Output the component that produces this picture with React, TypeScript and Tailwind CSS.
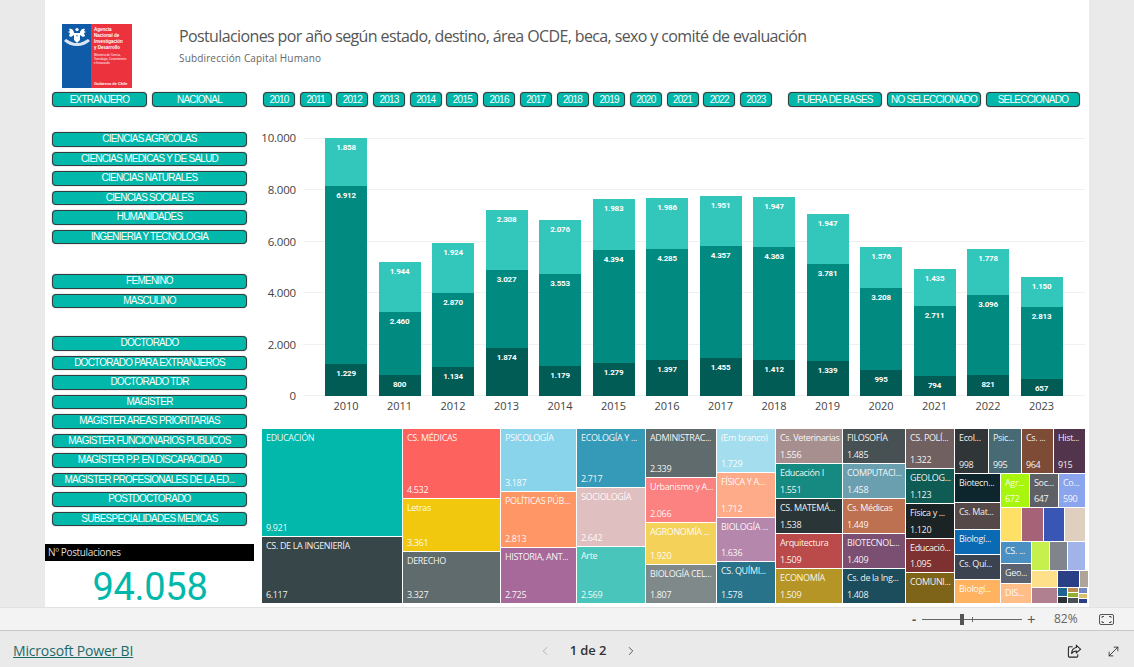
import { ChevronLeft, ChevronRight, MoveDiagonal } from "lucide-react";

type Cell = {
  c: string;
  t?: string;
  v?: string;
  row?: boolean;
  kids?: Cell[];
};

const years = [2010, 2011, 2012, 2013, 2014, 2015, 2016, 2017, 2018, 2019, 2020, 2021, 2022, 2023];

const bars = [
  [1229, 6912, 1858],
  [800, 2460, 1944],
  [1134, 2870, 1924],
  [1874, 3027, 2308],
  [1179, 3553, 2076],
  [1279, 4394, 1983],
  [1397, 4285, 1986],
  [1455, 4357, 1951],
  [1412, 4363, 1947],
  [1339, 3781, 1947],
  [995, 3208, 1576],
  [794, 2711, 1435],
  [821, 3096, 1778],
  [657, 2813, 1150],
];

const fmt = (n: number) => (n >= 1000 ? `${Math.floor(n / 1000)}.${String(n % 1000).padStart(3, "0")}` : String(n));

const areas = ["CIENCIAS AGRICOLAS", "CIENCIAS MEDICAS Y DE SALUD", "CIENCIAS NATURALES", "CIENCIAS SOCIALES", "HUMANIDADES", "INGENIERIA Y TECNOLOGIA"];
const degrees = [
  "DOCTORADO",
  "DOCTORADO PARA EXTRANJEROS",
  "DOCTORADO TDR",
  "MAGISTER",
  "MAGISTER AREAS PRIORITARIAS",
  "MAGISTER FUNCIONARIOS PUBLICOS",
  "MAGISTER P.P. EN DISCAPACIDAD",
  "MAGISTER PROFESIONALES DE LA ED...",
  "POSTDOCTORADO",
  "SUBESPECIALIDADES MEDICAS",
];

const treemap: Cell[] = [
  {
    c: "w-[140px]",
    kids: [
      { c: "h-[107px] bg-[#01b8aa]", t: "EDUCACIÓN", v: "9.921" },
      { c: "h-[66px] bg-[#374649]", t: "CS. DE LA INGENIERÍA", v: "6.117" },
    ],
  },
  {
    c: "w-[97px]",
    kids: [
      { c: "h-[69px] bg-[#fd625e]", t: "CS. MÉDICAS", v: "4.532" },
      { c: "h-[52px] bg-[#f2c80f]", t: "Letras", v: "3.361" },
      { c: "h-[51px] bg-[#5f6b6d]", t: "DERECHO", v: "3.327" },
    ],
  },
  {
    c: "w-[75px]",
    kids: [
      { c: "h-[62px] bg-[#8ad4eb]", t: "PSICOLOGÍA", v: "3.187" },
      { c: "h-[55px] bg-[#fe9666]", t: "POLÍTICAS PÚB...", v: "2.813" },
      { c: "h-[55px] bg-[#a66999]", t: "HISTORIA, ANT...", v: "2.725" },
    ],
  },
  {
    c: "w-[68px]",
    kids: [
      { c: "h-[58px] bg-[#3599b8]", t: "ECOLOGÍA Y ...", v: "2.717" },
      { c: "h-[58px] bg-[#dfbfbf]", t: "SOCIOLOGÍA", v: "2.642" },
      { c: "h-[56px] bg-[#4ac5bb]", t: "Arte", v: "2.569" },
    ],
  },
  {
    c: "w-[70px]",
    kids: [
      { c: "h-[48px] bg-[#5f6b6d]", t: "ADMINISTRAC...", v: "2.339" },
      { c: "h-[44px] bg-[#fb8281]", t: "Urbanismo y A...", v: "2.066" },
      { c: "h-[41px] bg-[#f4d25a]", t: "AGRONOMÍA ...", v: "1.920" },
      { c: "h-[38px] bg-[#7f898a]", t: "BIOLOGÍA CEL...", v: "1.807" },
    ],
  },
  {
    c: "w-[58px]",
    kids: [
      { c: "h-[43px] bg-[#a4ddee]", t: "(Em branco)", v: "1.729" },
      { c: "h-[44px] bg-[#fdab89]", t: "FÍSICA Y A...", v: "1.712" },
      { c: "h-[43px] bg-[#b687ac]", t: "BIOLOGÍA ...", v: "1.636" },
      { c: "h-[41px] bg-[#28738a]", t: "CS. QUÍMI...", v: "1.578" },
    ],
  },
  {
    c: "w-[66px]",
    kids: [
      { c: "h-[34px] bg-[#a78f8f]", t: "Cs. Veterinarias", v: "1.556" },
      { c: "h-[34px] bg-[#168980]", t: "Educación I", v: "1.551" },
      { c: "h-[34px] bg-[#293537]", t: "CS. MATEMÁ...", v: "1.538" },
      { c: "h-[34px] bg-[#bb4a4a]", t: "Arquitectura", v: "1.509" },
      { c: "h-[34px] bg-[#b59525]", t: "ECONOMÍA", v: "1.509" },
    ],
  },
  {
    c: "w-[62px]",
    kids: [
      { c: "h-[34px] bg-[#475052]", t: "FILOSOFÍA", v: "1.485" },
      { c: "h-[34px] bg-[#6a9fb0]", t: "COMPUTACI...", v: "1.458" },
      { c: "h-[34px] bg-[#bd7150]", t: "Cs. Médicas", v: "1.449" },
      { c: "h-[34px] bg-[#7b4f71]", t: "BIOTECNOL...", v: "1.409" },
      { c: "h-[34px] bg-[#1b4d5c]", t: "Cs. de la Ing...", v: "1.408" },
    ],
  },
  {
    c: "w-[48px]",
    kids: [
      { c: "h-[39px] bg-[#706060]", t: "CS. POLÍ...", v: "1.322" },
      { c: "h-[34px] bg-[#0f5c55]", t: "GEOLOG...", v: "1.123" },
      { c: "h-[34px] bg-[#1c2325]", t: "Física y ...", v: "1.120" },
      { c: "h-[33px] bg-[#7d3231]", t: "Educació...", v: "1.095" },
      { c: "h-[30px] bg-[#7d6419]", t: "COMUNI..." },
    ],
  },
  {
    c: "w-[130px]",
    kids: [
      {
        c: "h-[44px]",
        row: true,
        kids: [
          { c: "w-[33px] bg-[#303637]", t: "Ecol...", v: "998" },
          { c: "w-[32px] bg-[#476a75]", t: "Psic...", v: "995" },
          { c: "w-[31px] bg-[#7e4b36]", t: "Cs. ...", v: "964" },
          { c: "w-[31px] bg-[#52354c]", t: "Hist...", v: "915" },
        ],
      },
      {
        c: "h-[129px]",
        row: true,
        kids: [
          {
            c: "w-[45px]",
            kids: [
              { c: "h-[28px] bg-[#0d262e]", t: "Biotecn..." },
              { c: "h-[26px] bg-[#544848]", t: "Cs. Mat..." },
              { c: "h-[24px] bg-[#0a6ab4]", t: "Biologí..." },
              { c: "h-[24px] bg-[#3c4350]", t: "Cs. Quí..." },
              { c: "h-[23px] bg-[#ffb25f]", t: "Biologí..." },
            ],
          },
          {
            c: "w-[84px]",
            kids: [
              {
                c: "h-[33px]",
                row: true,
                kids: [
                  { c: "w-[28px] bg-[#a8f50e]", t: "Agr...", v: "672" },
                  { c: "w-[28px] bg-[#5f6066]", t: "Soc...", v: "647" },
                  { c: "w-[26px] bg-[#8aa4ee]", t: "Co...", v: "590" },
                ],
              },
              {
                c: "h-[33px]",
                row: true,
                kids: [
                  { c: "w-[20px] bg-[#ffe066]" },
                  { c: "w-[21px] bg-[#a66277]" },
                  { c: "w-[20px] bg-[#3a56b5]" },
                  { c: "w-[20px] bg-[#dfcfbf]" },
                ],
              },
              {
                c: "h-[61px]",
                row: true,
                kids: [
                  {
                    c: "w-[30px]",
                    kids: [
                      { c: "h-[21px] bg-[#4a90c2]", t: "CS. ..." },
                      { c: "h-[19px] bg-[#5d6270]", t: "Geo..." },
                      { c: "h-[19px] bg-[#ffbe87]", t: "DIS..." },
                    ],
                  },
                  {
                    c: "w-[53px]",
                    kids: [
                      {
                        c: "h-[28px]",
                        row: true,
                        kids: [
                          { c: "w-[17px] bg-[#c6f04e]" },
                          { c: "w-[17px] bg-[#7f858a]" },
                          { c: "w-[17px] bg-[#a0b4ea]" },
                        ],
                      },
                      {
                        c: "h-[16px]",
                        row: true,
                        kids: [
                          { c: "w-[25px] bg-[#ffe08a]" },
                          { c: "w-[21px] bg-[#2a3f85]" },
                          { c: "w-[5px] bg-[#afa498]" },
                        ],
                      },
                      {
                        c: "h-[15px]",
                        row: true,
                        kids: [
                          { c: "w-[25px] bg-[#b08090]" },
                          {
                            c: "w-[9px]",
                            kids: [
                              { c: "h-[8px] bg-[#1f6391]" },
                              { c: "h-[6px] bg-[#2b3238]" },
                            ],
                          },
                          {
                            c: "w-[10px]",
                            kids: [
                              { c: "h-[4px] bg-[#bd8a50]" },
                              { c: "h-[4px] bg-[#93b02c]" },
                              { c: "h-[5px] bg-[#4a5258]" },
                            ],
                          },
                          {
                            c: "w-[6px]",
                            kids: [
                              { c: "h-[5px] bg-[#7587c0]" },
                              { c: "h-[4px] bg-[#d8c070]" },
                              { c: "h-[4px] bg-[#2a3f85]" },
                            ],
                          },
                        ],
                      },
                    ],
                  },
                ],
              },
            ],
          },
        ],
      },
    ],
  },
];

const Pill = ({ label, className }: { label: string; className: string }) => (
  <div
    className={`flex items-center justify-center overflow-hidden whitespace-nowrap rounded-[4px] border border-[#333f3e] bg-[#01b8aa] font-['Liberation_Sans',Arial,sans-serif] text-[10px] leading-none tracking-[-0.75px] text-white shadow-[0_0_1px_#555] ${className}`}
  >
    {label}
  </div>
);

const TreeCell = ({ cell }: { cell: Cell }) => {
  if (cell.kids) {
    return (
      <div className={`flex shrink-0 gap-px ${cell.row ? "flex-row" : "flex-col"} ${cell.c}`}>
        {cell.kids.map((kid, i) => (
          <TreeCell key={i} cell={kid} />
        ))}
      </div>
    );
  }
  return (
    <div className={`flex shrink-0 flex-col justify-between overflow-hidden whitespace-nowrap px-[4px] pb-[1px] pt-[2px] text-[9px] leading-[14px] tracking-[-0.35px] text-white/95 ${cell.c}`}>
      <span>{cell.t}</span>
      <span>{cell.v}</span>
    </div>
  );
};

const Logo = () => (
  <svg viewBox="0 0 70 64" className="h-[64px] w-[70px] font-['Liberation_Sans',Arial,sans-serif]">
    <rect width="29" height="64" fill="#0f5ba8" />
    <rect x="29" width="41" height="64" fill="#ec333d" />
    {/* crest */}
    <g fill="#fff">
      <path d="M12 9h6v7l-3 3-3-3z" />
      <path d="M12 8c-1-3-3-4-5-3l1 2-2 1 2 1-1 3 2 1 3-2zM18 8c1-3 3-4 5-3l-1 2 2 1-2 1 1 3-2 1-3-2z" />
      <path d="M4 15c4 2 6 4 11 4s7-2 11-4l2 2c-3 3-8 5-13 5S5 20 2 17z" opacity="0.85" />
      <circle cx="15" cy="5.5" r="1.6" />
    </g>
    <path d="M15 10.5l.8 1.8h-1.6z" fill="#0f5ba8" />
    <g fill="#fff" fontWeight="700" fontSize="4.5">
      <text x="32" y="7">Agencia</text>
      <text x="32" y="13">Nacional de</text>
      <text x="32" y="19">Investigación</text>
      <text x="32" y="25">y Desarrollo</text>
    </g>
    <g fill="#fff" fontSize="2.8">
      <text x="32" y="31.5">Ministerio de Ciencia,</text>
      <text x="32" y="35.5">Tecnología, Conocimiento</text>
      <text x="32" y="39.5">e Innovación</text>
    </g>
    <text x="32" y="60.5" fill="#fff" fontSize="3.9" fontWeight="700">Gobierno de Chile</text>
  </svg>
);

const Chart = () => (
  <div className="flex h-[322px] flex-col pt-[31px]">
    <div className="flex">
      <div className="flex h-[258px] w-[34px] flex-col justify-between text-[11.5px] tracking-[-0.2px] text-[#444]">
        {["10.000", "8.000", "6.000", "4.000", "2.000", "0"].map((l) => (
          <div key={l} className="flex h-0 items-center justify-end">
            {l}
          </div>
        ))}
      </div>
      <div className="relative ml-[7px] h-[258px] w-[782px]">
        <div className="absolute inset-0 flex flex-col justify-between">
          {[0, 1, 2, 3, 4, 5].map((i) => (
            <div key={i} className="h-px bg-[#f0f0f0]" />
          ))}
        </div>
        <div className="relative flex h-full items-end gap-[11.5px] pl-[22px]">
          {bars.map((stack, i) => (
            <div key={i} className="flex w-[42px] flex-col-reverse">
              {stack.map((n, j) => (
                <div
                  key={j}
                  style={{ height: `${n * 0.0258}px` }}
                  className={`overflow-hidden pt-[5px] text-center font-['Roboto',sans-serif] text-[8px] font-bold leading-[10px] tracking-[-0.2px] text-white ${
                    j === 0 ? "bg-[#005c55]" : j === 1 ? "bg-[#018a80]" : "bg-[#33c6bb]"
                  }`}
                >
                  {fmt(n)}
                </div>
              ))}
            </div>
          ))}
        </div>
      </div>
    </div>
    <div className="ml-[41px] mt-[2px] flex gap-[11.5px] pl-[22px] text-[11px] leading-[16px] text-[#444]">
      {years.map((y) => (
        <div key={y} className="w-[42px] text-center">
          {y}
        </div>
      ))}
    </div>
  </div>
);

export default function App() {
  return (
    <div className="flex h-[667px] w-[1134px] flex-col overflow-hidden bg-[#eaeaea] font-['Open_Sans',sans-serif]">
      <div className="ml-[45px] flex h-[607px] w-[1044px] shrink-0 flex-col bg-white">
        <div className="flex h-[92px] shrink-0 pl-[17px] pt-[24px]">
          <Logo />
          <div className="ml-[47px]">
            <div className="whitespace-nowrap text-[16px] leading-[24px] tracking-[-0.62px] text-[#555]">
              Postulaciones por año según estado, destino, área OCDE, beca, sexo y comité de evaluación
            </div>
            <div className="mt-[3px] text-[10px] leading-[14px] tracking-[0.15px] text-[#666]">Subdirección Capital Humano</div>
          </div>
        </div>

        <div className="flex h-[15px] shrink-0 pl-[7px]">
          <div className="flex gap-[5px]">
            <Pill label="EXTRANJERO" className="w-[95px]" />
            <Pill label="NACIONAL" className="w-[95px]" />
          </div>
          <div className="ml-[16px] flex gap-[4.7px]">
            {years.map((y) => (
              <Pill key={y} label={String(y)} className="w-[32px]" />
            ))}
          </div>
          <div className="ml-[16px] flex gap-[5px]">
            <Pill label="FUERA DE BASES" className="w-[94px]" />
            <Pill label="NO SELECCIONADO" className="w-[94px]" />
            <Pill label="SELECCIONADO" className="w-[94px]" />
          </div>
        </div>

        <div className="flex min-h-0 flex-1">
          <div className="flex w-[217px] shrink-0 flex-col pt-[25px]">
            <div className="ml-[7px] flex w-[195px] flex-col gap-[5px]">
              {areas.map((a) => (
                <Pill key={a} label={a} className="h-[14.5px]" />
              ))}
            </div>
            <div className="ml-[7px] mt-[30px] flex w-[195px] flex-col gap-[5px]">
              <Pill label="FEMENINO" className="h-[14.5px]" />
              <Pill label="MASCULINO" className="h-[14.5px]" />
            </div>
            <div className="ml-[7px] mt-[28px] flex w-[195px] flex-col gap-[5px]">
              {degrees.map((d) => (
                <Pill key={d} label={d} className="h-[14.5px]" />
              ))}
            </div>
            <div className="mt-[18px] flex h-[17px] w-[209px] shrink-0 items-center bg-black pl-[3px] text-[10px] tracking-[-0.35px] text-[#ddd]">
              Nº Postulaciones
            </div>
            <div className="mt-[8px] w-[209px] pl-[1px] text-center font-['Roboto',sans-serif] text-[38px] leading-[36px] tracking-[-0.3px] text-[#01b8aa]">
              94.058
            </div>
          </div>

          <div className="flex min-w-0 flex-col">
            <Chart />
            <div className="flex h-[174px] gap-px">
              {treemap.map((col, i) => (
                <TreeCell key={i} cell={col} />
              ))}
            </div>
          </div>
        </div>
      </div>

      <div className="flex h-[24px] shrink-0 items-center border-y border-y-[#e2e2e2] border-b-[#c8c8c8] bg-[#f3f3f3] pl-[912px] text-[#555]">
        <span className="w-[8px] text-[13px] font-bold leading-none">-</span>
        <div className="relative ml-[2px] h-[1px] w-[100px] bg-[#666]">
          <div className="absolute left-[38px] top-[-5px] h-[11px] w-[4px] bg-[#555]" />
          <div className="absolute left-[50px] top-[-2px] h-[5px] w-px bg-[#666]" />
        </div>
        <span className="ml-[5px] w-[12px] text-[15px] leading-none">+</span>
        <span className="ml-[15px] text-[12px] text-[#666]">82%</span>
        <svg viewBox="0 0 15 11" fill="none" stroke="#555" className="ml-[21px] h-[11px] w-[15px]">
          <rect x="0.5" y="0.5" width="14" height="10" rx="1.5" />
          <path d="M3 4V2.5h2M10 2.5h2V4M12 7v1.5h-2M5 8.5H3V7" />
        </svg>
      </div>

      <div className="flex min-h-0 flex-1 items-center justify-between px-[13px] pt-[4px]">
        <a className="w-[300px] text-[14px] leading-[20px] tracking-[-0.17px] text-[#1b6a6a] underline">Microsoft Power BI</a>
        <div className="flex items-center text-[#333]">
          <ChevronLeft size={14} strokeWidth={1.5} className="text-[#aaa]" />
          <span className="mx-[18px] text-[13px] font-semibold tracking-[-0.1px]">1 de 2</span>
          <ChevronRight size={14} strokeWidth={1.5} className="text-[#444]" />
        </div>
        <div className="flex w-[258px] items-center justify-end gap-[24px] text-[#222]">
          <svg viewBox="0 0 16 16" fill="none" stroke="currentColor" strokeWidth="1.1" className="h-[15px] w-[15px]">
            <path d="M6 3H2.5A1 1 0 0 0 1.5 4v9a1 1 0 0 0 1 1h8a1 1 0 0 0 1-1v-2" />
            <path d="M10 1.5l4.5 4-4.5 4V7.4C8 7.4 6 8.2 4.8 10.5 5 7 7 4.2 10 3.8z" />
          </svg>
          <MoveDiagonal size={15} strokeWidth={1.3} />
        </div>
      </div>
    </div>
  );
}
